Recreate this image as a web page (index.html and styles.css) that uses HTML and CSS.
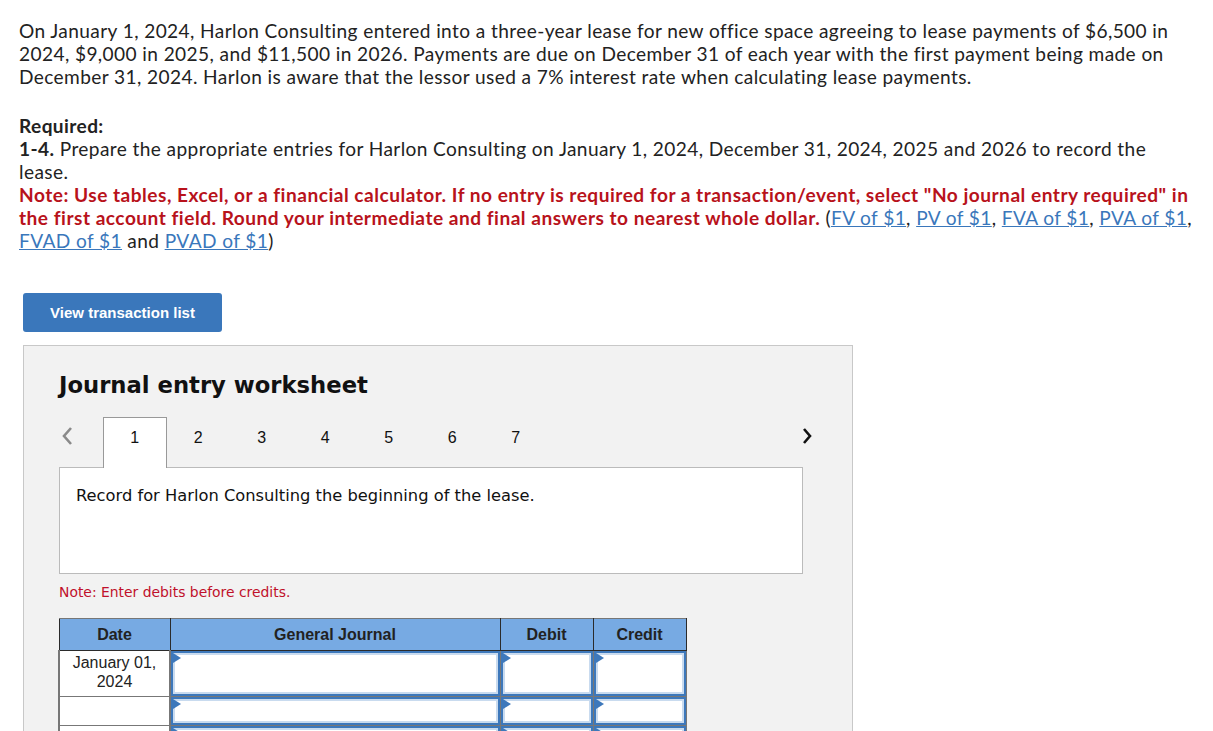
FILE: index.html
```html
<!doctype html>
<html lang="en">
<head>
	<meta charset="UTF-8" />
	<title>Journal entry worksheet</title>
	<link rel="stylesheet" href="styles.css">
</head>
<body>
	<section class="question">
		<p>On January 1, 2024, Harlon Consulting entered into a three-year lease for new office space agreeing to lease payments of $6,500 in 2024, $9,000 in 2025, and $11,500 in 2026. Payments are due on December 31 of each year with the first payment being made on December 31, 2024. Harlon is aware that the lessor used a 7% interest rate when calculating lease payments.</p>
		<p class="required">
			<b>Required:</b><br>
			<b>1-4.</b> Prepare the appropriate entries for Harlon Consulting on January 1, 2024, December 31, 2024, 2025 and 2026 to record the<br>lease.<br>
			<span class="note">Note: Use tables, Excel, or a financial calculator. If no entry is required for a transaction/event, select "No journal entry required" in</span>
			<span class="note">the first account field. Round your intermediate and final answers to nearest whole dollar.</span>
			(<a href="javascript:;">FV of $1</a>, <a href="javascript:;">PV of $1</a>, <a href="javascript:;">FVA of $1</a>, <a href="javascript:;">PVA of $1</a>, <a href="javascript:;">FVAD of $1</a> and <a href="javascript:;">PVAD of $1</a>)
		</p>
	</section>

	<button class="btn">View transaction list</button>

	<section class="worksheet">
		<h2>Journal entry worksheet</h2>
		<nav class="tabs">
			<a href="javascript:;" class="arrow prev">
				<svg width="12" height="20" viewBox="0 0 12 20"><path d="M10 2 L3 10 L10 18" fill="none" stroke="#8a8a8a" stroke-width="2.6"/></svg>
			</a>
			<a href="javascript:;" class="tab active">1</a>
			<a href="javascript:;" class="tab">2</a>
			<a href="javascript:;" class="tab">3</a>
			<a href="javascript:;" class="tab">4</a>
			<a href="javascript:;" class="tab">5</a>
			<a href="javascript:;" class="tab">6</a>
			<a href="javascript:;" class="tab">7</a>
			<a href="javascript:;" class="arrow next">
				<svg width="12" height="20" viewBox="0 0 12 20"><path d="M2 3 L8 10 L2 17" fill="none" stroke="#111" stroke-width="2.6"/></svg>
			</a>
		</nav>
		<div class="panel">
			<p>Record for Harlon Consulting the beginning of the lease.</p>
		</div>
		<p class="hint">Note: Enter debits before credits.</p>

		<table class="journal">
			<thead>
				<tr>
					<th class="c-date">Date</th>
					<th class="c-acc">General Journal</th>
					<th class="c-num">Debit</th>
					<th class="c-num">Credit</th>
				</tr>
			</thead>
			<tbody>
				<tr class="tall">
					<td class="date">January 01,<br>2024</td>
					<td><div class="field"></div></td>
					<td><div class="field"></div></td>
					<td><div class="field"></div></td>
				</tr>
				<tr>
					<td class="date"></td>
					<td><div class="field"></div></td>
					<td><div class="field"></div></td>
					<td><div class="field"></div></td>
				</tr>
				<tr>
					<td class="date"></td>
					<td><div class="field"></div></td>
					<td><div class="field"></div></td>
					<td><div class="field"></div></td>
				</tr>
				<tr>
					<td class="date"></td>
					<td><div class="field"></div></td>
					<td><div class="field"></div></td>
					<td><div class="field"></div></td>
				</tr>
			</tbody>
		</table>
	</section>
</body>
</html>
```

FILE: styles.css
```css
*{
	margin: 0;
	padding: 0;
	box-sizing: border-box;
}
body{
	font-family: "Lato", "Open Sans", sans-serif;
	color: #222;
	background: #fff;
}
.question{
	padding: 19px 0 0 19px;
	width: 1195px;
	font-size: 19.1px;
	line-height: 23px;
	letter-spacing: 0.4px;
}
.question p{
	margin-bottom: 26px;
}
.required b{
	font-weight: 700;
}
.note{
	color: #b8121b;
	font-weight: 700;
	letter-spacing: 0.5px;
}
.question a{
	color: #3a77bb;
	text-decoration: underline;
}

.btn{
	display: block;
	margin: 41px 0 0 23px;
	width: 199px;
	height: 39px;
	background: #3a77bb;
	color: #fff;
	border: none;
	border-radius: 3px;
	font-family: "Liberation Sans", Arial, sans-serif;
	font-size: 15px;
	font-weight: 700;
}

.worksheet{
	margin: 13px 0 0 23px;
	width: 830px;
	height: 500px;
	background: #f2f2f2;
	border: 1px solid #c8c8c8;
	padding: 24px 49px 0 35px;
}
.worksheet h2{
	font-family: "DejaVu Sans", Verdana, sans-serif;
	font-size: 22.7px;
	font-weight: 700;
	color: #111;
	height: 30px;
	line-height: 30px;
}

.tabs{
	display: flex;
	align-items: flex-end;
	margin-top: 16px;
	height: 51px;
}
.tabs a{
	color: #111;
	text-decoration: none;
}
.arrow{
	align-self: flex-start;
	height: 40px;
	display: flex;
	align-items: center;
}
.prev{
	width: 44px;
	padding-left: 2px;
}
.next{
	margin-left: auto;
	margin-right: -11px;
}
.tab{
	width: 63.5px;
	height: 50px;
	line-height: 40px;
	text-align: center;
	font-family: "Liberation Sans", Arial, sans-serif;
	font-size: 16px;
	border: 1px solid transparent;
	border-bottom: none;
}
.tab.active{
	background: #fff;
	border-color: #999;
	margin-bottom: -1px;
	position: relative;
	z-index: 1;
	height: 51px;
}

.panel{
	height: 107px;
	background: #fff;
	border: 1px solid #bbb;
	padding: 18px 16px;
	font-family: "DejaVu Sans", Verdana, sans-serif;
	font-size: 16.3px;
	color: #111;
}

.hint{
	margin-top: 10px;
	font-family: "DejaVu Sans", Verdana, sans-serif;
	font-size: 13.9px;
	color: #c0102b;
}

.journal{
	margin: 18px 0 0 -1px;
	border-collapse: collapse;
	font-family: "Liberation Sans", Arial, sans-serif;
}
.journal th{
	height: 32px;
	background: #77aae3;
	border: 1px solid #2b2b2b;
	border-top-color: #777;
	font-size: 16px;
	font-weight: 700;
	color: #222;
}
.c-date{
	width: 111px;
}
.c-acc{
	width: 330px;
}
.c-num{
	width: 93px;
}
.journal td{
	height: 28px;
	padding: 0;
	background: #fff;
	border: 1px solid #777;
	border-top: none;
}
.journal tr.tall td{
	height: 45px;
}
.journal td.date{
	text-align: center;
	vertical-align: top;
	padding-top: 2px;
	font-size: 16px;
	line-height: 19px;
	color: #222;
	border-left: 2px solid #777;
	border-right: 2px solid #777;
}
.field{
	position: relative;
	height: 100%;
	border: 2px solid #3d78bb;
	box-shadow: inset 0 0 0 2px #c9dbef;
	background: #fff;
}
.journal tr.tall .field{
	height: 45px;
}
.journal tr:not(.tall) .field{
	height: 28px;
}
.field::before{
	content: "";
	position: absolute;
	left: 0;
	top: 0;
	border-left: 8px solid #3d78bb;
	border-top: 5px solid transparent;
	border-bottom: 5px solid transparent;
}
```
